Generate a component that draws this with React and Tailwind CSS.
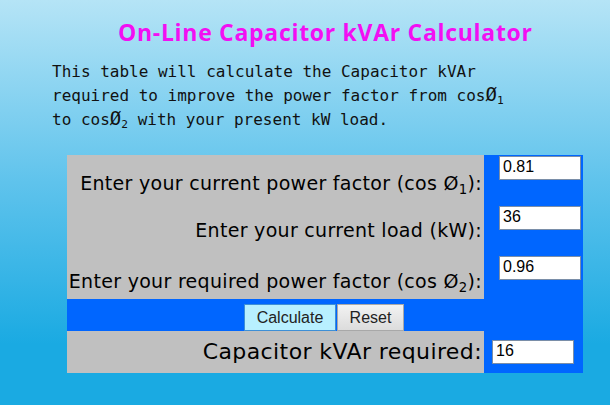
import React from "react";

function Sub({ children }) {
  return <sub className="text-[0.7em] align-baseline relative top-[0.3em]">{children}</sub>;
}

export default function App() {
  const label =
    "font-['DejaVu_Sans',sans-serif] text-[19px] leading-[22px] tracking-[0.3px] text-black text-right pr-[2px]";
  const input =
    "block w-[82px] h-[24px] bg-white border border-[#7a8ea8] px-[3px] font-['Liberation_Sans',Arial,sans-serif] text-[16px] text-black leading-[18px] pb-[2px] outline-none";
  return (
    <div className="w-[610px] h-[405px] overflow-hidden bg-[linear-gradient(to_bottom,#b5e4f6_0%,#5fc3ec_45%,#1aaae2_85%,#1aaae2_100%)]">
      <h1 className="pt-[18px] pl-[118px] font-['Open_Sans',sans-serif] font-bold text-[23px] tracking-[0.7px] leading-[28px] text-[#f20ff2]">
        On-Line Capacitor kVAr Calculator
      </h1>
      <p className="mt-[14px] ml-[52px] font-['DejaVu_Sans_Mono',monospace] text-[16px] leading-[23px] text-[#111] whitespace-pre">
        {"This table will calculate the Capacitor kVAr\nrequired to improve the power factor from cos"}
        <span className="text-[19px]">Ø</span>
        <Sub>1</Sub>
        {"\nto cos"}
        <span className="text-[19px]">Ø</span>
        <Sub>2</Sub>
        {" with your present kW load."}
      </p>
      <div className="mt-[24px] ml-[67px] w-[516px] flex flex-col">
        <div className="flex h-[50px]">
          <div className={`w-[417px] bg-[#c0c0c0] pt-[17px] ${label}`}>
            Enter your current power factor (cos Ø<Sub>1</Sub>):
          </div>
          <div className="flex-1 bg-[#0066ff] pl-[15px] pt-[1px]">
            <input className={input} defaultValue="0.81" />
          </div>
        </div>
        <div className="flex h-[50px]">
          <div className={`w-[417px] bg-[#c0c0c0] pt-[14px] ${label}`}>
            Enter your current load (kW):
          </div>
          <div className="flex-1 bg-[#0066ff] pl-[15px] pt-[1px]">
            <input className={input} defaultValue="36" />
          </div>
        </div>
        <div className="flex h-[44px]">
          <div className={`w-[417px] bg-[#c0c0c0] pt-[15px] ${label}`}>
            Enter your required power factor (cos Ø<Sub>2</Sub>):
          </div>
          <div className="flex-1 bg-[#0066ff] pl-[15px] pt-[1px]">
            <input className={input} defaultValue="0.96" />
          </div>
        </div>
        <div className="h-[32px] bg-[#0066ff] flex justify-center items-start pt-[5px] pr-[2px]">
          <button className="w-[92px] h-[27px] bg-[#b8f0ff] border border-[#3d8fd6] font-['Liberation_Sans',Arial,sans-serif] text-[16px] text-[#222] leading-none">
            Calculate
          </button>
          <button className="ml-[1px] w-[67px] h-[27px] bg-[linear-gradient(to_bottom,#f2f2f2,#dcdcdc)] border border-[#a8a8a8] font-['Liberation_Sans',Arial,sans-serif] text-[16px] text-[#222] leading-none">
            Reset
          </button>
        </div>
        <div className="flex h-[42px]">
          <div className="w-[417px] bg-[#c0c0c0] pt-[8px] pr-[2px] text-right font-['DejaVu_Sans',sans-serif] text-[22px] tracking-[0.4px] text-black leading-[26px]">
            Capacitor kVAr required:
          </div>
          <div className="flex-1 bg-[#0066ff] pl-[8px] pt-[9px]">
            <input className={input} defaultValue="16" />
          </div>
        </div>
      </div>
    </div>
  );
}
